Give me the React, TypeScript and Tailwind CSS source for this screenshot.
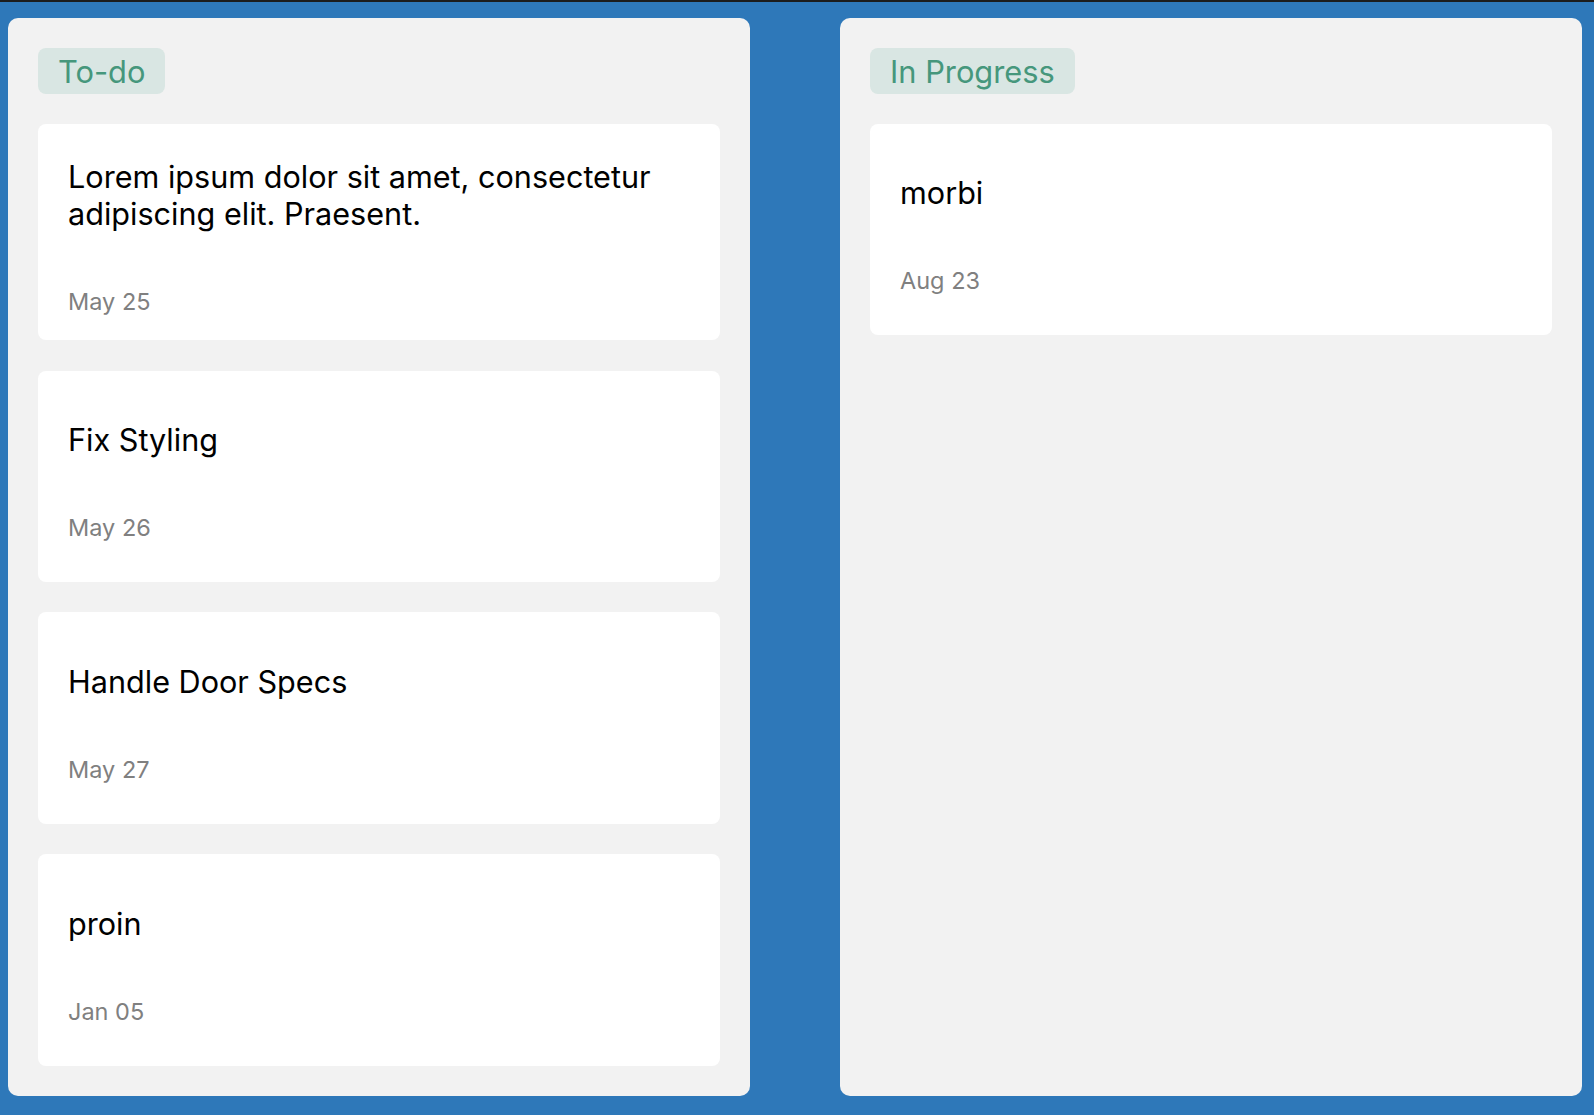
import React from "react";

type Task = { title: string; date: string };

const columns: { name: string; tasks: Task[] }[] = [
  {
    name: "To-do",
    tasks: [
      { title: "Lorem ipsum dolor sit amet, consectetur adipiscing elit. Praesent.", date: "May 25" },
      { title: "Fix Styling", date: "May 26" },
      { title: "Handle Door Specs", date: "May 27" },
      { title: "proin", date: "Jan 05" },
    ],
  },
  {
    name: "In Progress",
    tasks: [{ title: "morbi", date: "Aug 23" }],
  },
];

function Card({ task }: { task: Task }) {
  return (
    <div className="flex min-h-[211.3px] flex-col justify-center rounded-lg bg-white px-[30px] pt-[34px] pb-[24px]">
      <div className="text-[30.6px] leading-[37px] text-black">{task.title}</div>
      <div className="mt-[56px] text-[23.5px] leading-[28px] text-[#808080]">{task.date}</div>
    </div>
  );
}

function Column({ name, tasks }: { name: string; tasks: Task[] }) {
  return (
    <div className="flex w-[742px] flex-col rounded-[10px] bg-[#f2f2f2] p-[30px]">
      <div className="flex">
        <div className="h-[46px] rounded-lg bg-[#d9e6e3] px-[20px] pt-[2px] text-[30.8px] leading-[44px] text-[#46977c]">
          {name}
        </div>
      </div>
      <div className="mt-[30px] flex flex-col gap-[30.6px]">
        {tasks.map((t, i) => (
          <Card key={i} task={t} />
        ))}
      </div>
    </div>
  );
}

export default function App() {
  return (
    <div
      className="flex h-[1115px] w-full gap-[90px] border-t-2 border-[#1c1c1c] bg-[#2e78b9] pt-[16px] pb-[19px] pl-[8px]"
      style={{ fontFamily: "Inter, 'Noto Sans', sans-serif" }}
    >
      {columns.map((c) => (
        <Column key={c.name} name={c.name} tasks={c.tasks} />
      ))}
    </div>
  );
}
